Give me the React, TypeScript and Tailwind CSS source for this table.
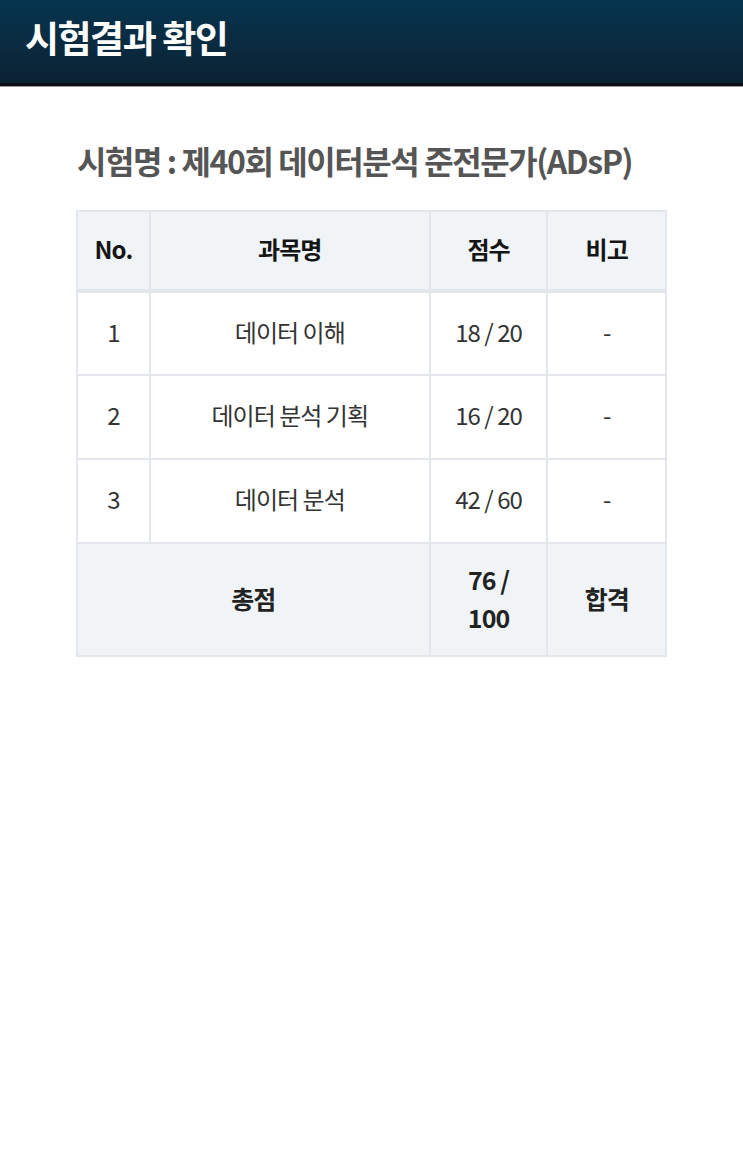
const rows = [
  { no: '1', name: '데이터 이해', score: '18 / 20', note: '-' },
  { no: '2', name: '데이터 분석 기획', score: '16 / 20', note: '-' },
  { no: '3', name: '데이터 분석', score: '42 / 60', note: '-' },
];

const font = { fontFamily: '"Noto Sans CJK KR", "Noto Sans", sans-serif' };

export default function App() {
  return (
    <div className="min-h-[1155px] w-[743px] bg-white" style={font}>
      <div className="h-[83px] bg-gradient-to-b from-[#06354f] to-[#0b2233] flex items-center px-[25px] pb-[8px]">
        <h1 className="text-white text-[37px] font-bold tracking-[-0.04em] leading-none">시험결과 확인</h1>
      </div>
      <div className="h-[3px] bg-[#0a0e12]" />
      <div className="h-px bg-[#9a9a9a]" />

      <div className="px-[76px] pt-[57px]">
        <h2 className="text-[32px] font-bold text-[#555] tracking-[-0.045em] leading-none pl-px">
          시험명 : 제40회 데이터분석 준전문가(ADsP)
        </h2>

        <table className="mt-[34px] w-[591px] border-collapse text-center text-[#333] tracking-[-0.06em]">
          <colgroup>
            <col className="w-[73px]" />
            <col className="w-[281px]" />
            <col className="w-[118px]" />
            <col className="w-[119px]" />
          </colgroup>
          <thead>
            <tr className="h-[80px] bg-[#f1f4f6] text-[#151515] text-[24px] font-bold">
              <th className="border-2 border-[#e3e6ea] border-b-4 pb-1">No.</th>
              <th className="border-2 border-[#e3e6ea] border-b-4 pb-1">과목명</th>
              <th className="border-2 border-[#e3e6ea] border-b-4 pb-1">점수</th>
              <th className="border-2 border-[#e3e6ea] border-b-4 pb-1">비고</th>
            </tr>
          </thead>
          <tbody>
            {rows.map((r) => (
              <tr key={r.no} className="h-[84px] text-[24px]">
                <td className="border-2 border-[#e3e6ea] pb-1">{r.no}</td>
                <td className="border-2 border-[#e3e6ea] pb-1">{r.name}</td>
                <td className="border-2 border-[#e3e6ea] pb-1">{r.score}</td>
                <td className="border-2 border-[#e3e6ea] pb-1">{r.note}</td>
              </tr>
            ))}
            <tr className="h-[113px] bg-[#f1f4f6] text-[#222] text-[25px] font-bold leading-[38px]">
              <td colSpan={2} className="border-2 border-[#e3e6ea] pb-1">총점</td>
              <td className="border-2 border-[#e3e6ea] pb-1">
                76 /<br />100
              </td>
              <td className="border-2 border-[#e3e6ea] pb-1">합격</td>
            </tr>
          </tbody>
        </table>
      </div>
    </div>
  );
}
